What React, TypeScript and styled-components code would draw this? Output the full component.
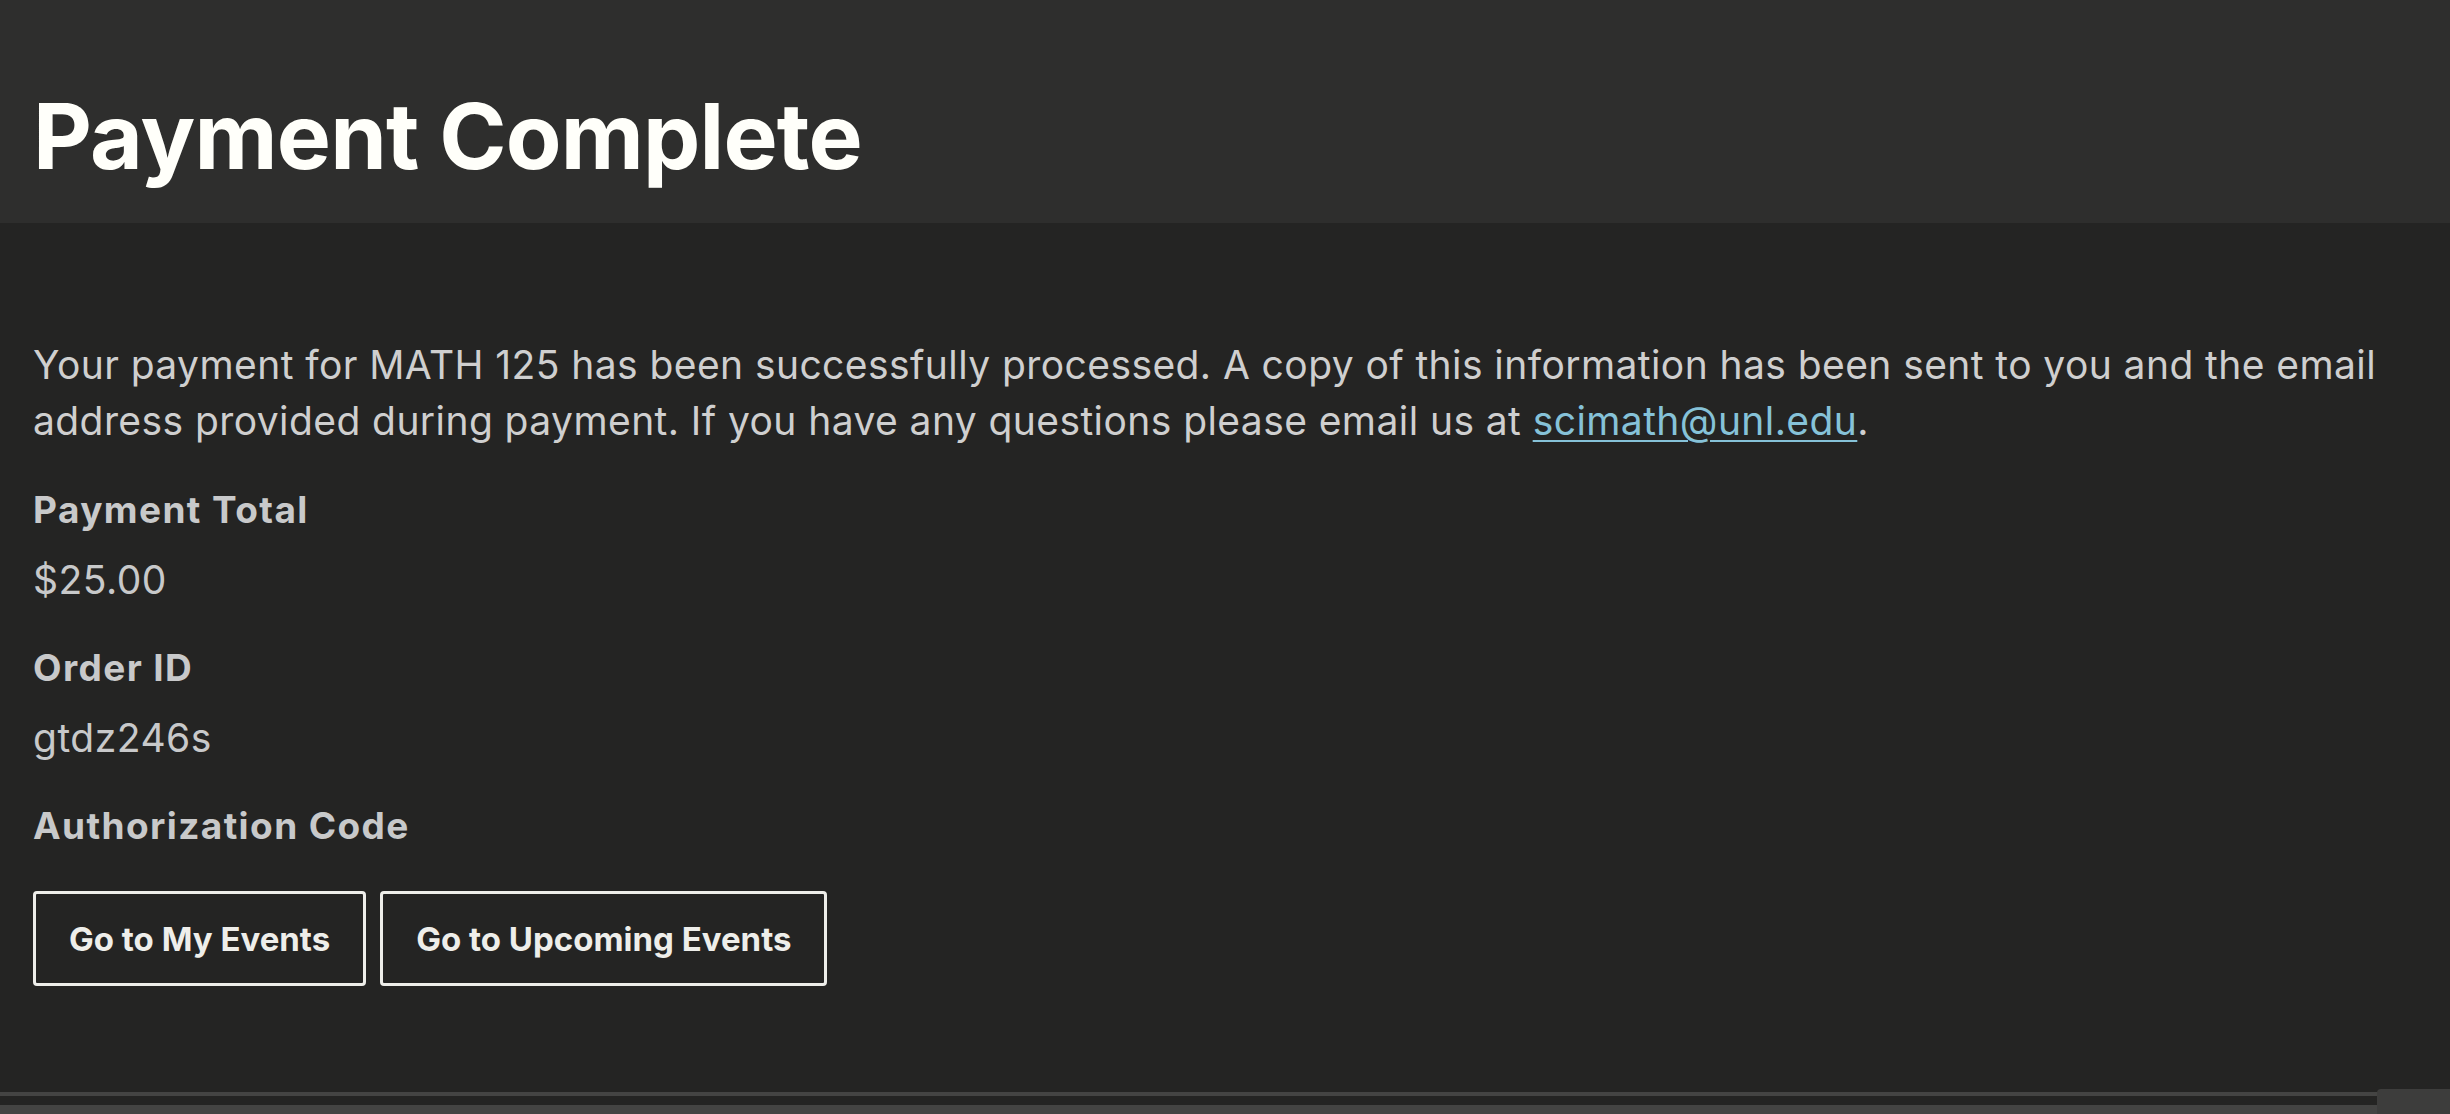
import React from "react";
import styled, { createGlobalStyle } from "styled-components";

const Global = createGlobalStyle`
  html, body { margin: 0; padding: 0; background: #242423; }
  body { font-family: Inter, "Noto Sans", sans-serif; color: #c9c9c9; }
  * { box-sizing: border-box; }
`;

const Page = styled.div`
  min-height: 1114px;
  display: flex;
  flex-direction: column;
  background: #242423;
`;

const Header = styled.header`
  background: #2e2e2d;
  height: 223px;
  padding: 0 33px;
  display: flex;
  align-items: flex-end;
`;

const Title = styled.h1`
  margin: 0 0 41px;
  font-size: 91px;
  line-height: 1;
  font-weight: 700;
  color: #fffffa;
  letter-spacing: -0.8px;
`;

const Main = styled.main`
  flex: 1;
  padding: 114px 33px 0;
`;

const Intro = styled.p`
  margin: 0 0 36px;
  font-size: 39px;
  line-height: 56px;
  letter-spacing: 0.42px;
  color: #cfcfcf;
`;

const Link = styled.a`
  color: #86c2d8;
  text-decoration: underline;
  text-underline-offset: 5px;
  text-decoration-thickness: 2px;
`;

const Field = styled.dl`
  margin: 0;
`;

const Label = styled.dt<{ $gap?: number }>`
  font-size: 37px;
  font-weight: 700;
  line-height: 50px;
  letter-spacing: 1.4px;
  color: #c8c9ca;
  margin-bottom: ${(p) => p.$gap ?? 19}px;
`;

const Value = styled.dd`
  margin: 0 0 37px;
  font-size: 39px;
  line-height: 52px;
  letter-spacing: 0.5px;
  color: #c8c9ca;
`;

const Actions = styled.div`
  display: flex;
  gap: 14px;
  margin-top: 40px;
`;

const Button = styled.a`
  display: inline-flex;
  align-items: center;
  justify-content: center;
  height: 95px;
  padding: 0 33px;
  border: 3px solid #eeeeea;
  border-radius: 4px;
  color: #eeeeea;
  font-size: 33px;
  font-weight: 700;
  text-decoration: none;
`;

const Footer = styled.footer`
  position: relative;
  height: 22px;
  border-top: 4px solid #444443;
  display: flex;
  flex-direction: column;
  justify-content: flex-end;
`;

const FooterBar = styled.div`
  height: 9px;
  background: #444443;
`;

const Corner = styled.div`
  position: absolute;
  right: 0;
  top: -7px;
  width: 73px;
  height: 29px;
  background: #3d3d3c;
  border-top-left-radius: 4px;
`;

export default function App() {
  return (
    <Page>
      <Global />
      <Header>
        <Title>Payment Complete</Title>
      </Header>
      <Main>
        <Intro>
          Your payment for MATH 125 has been successfully processed. A copy of this information has been sent to you
          and the email address provided during payment. If you have any questions please email us at{" "}
          <Link href="#">scimath@unl.edu</Link>.
        </Intro>
        <Field>
          <Label>Payment Total</Label>
          <Value>$25.00</Value>
          <Label>Order ID</Label>
          <Value>gtdz246s</Value>
          <Label $gap={0}>Authorization Code</Label>
        </Field>
        <Actions>
          <Button href="#">Go to My Events</Button>
          <Button href="#">Go to Upcoming Events</Button>
        </Actions>
      </Main>
      <Footer>
        <FooterBar />
        <Corner />
      </Footer>
    </Page>
  );
}
